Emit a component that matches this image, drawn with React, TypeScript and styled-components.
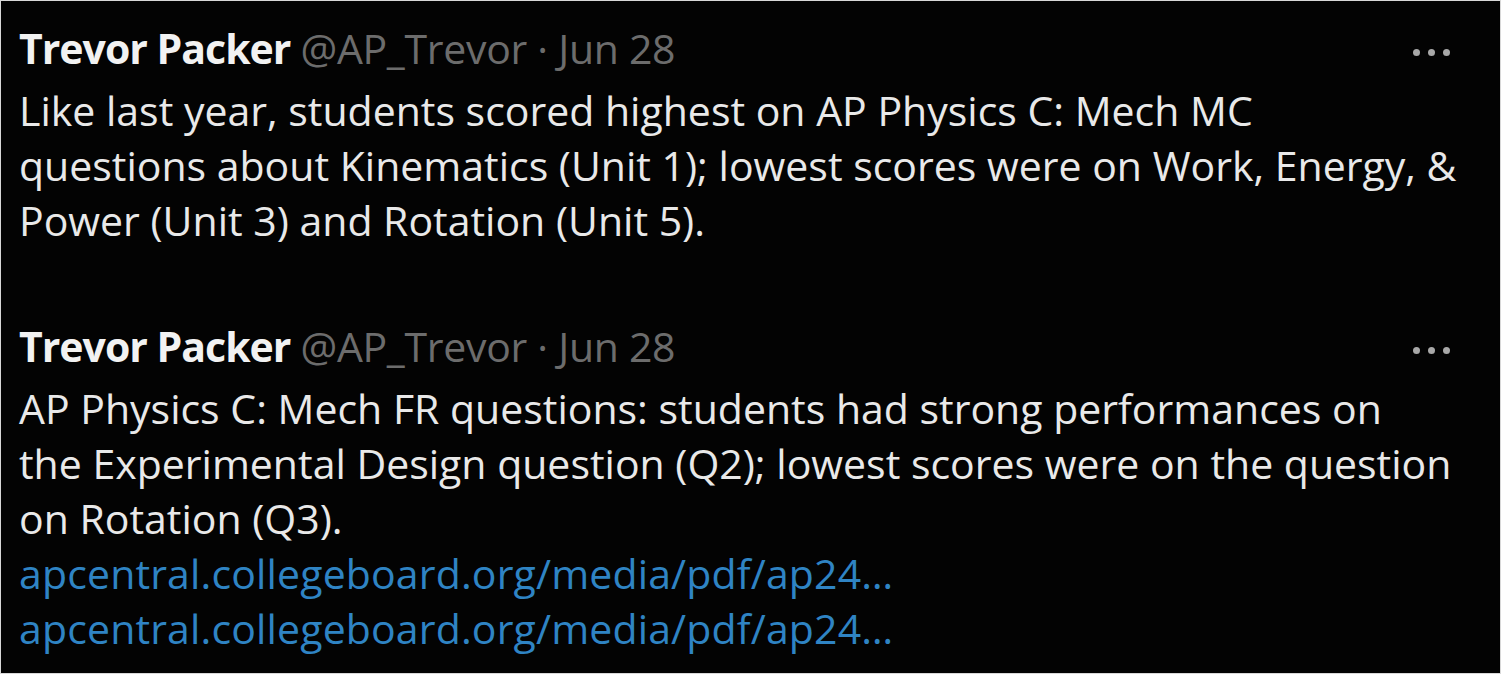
import { ReactElement } from 'react';
import styled, { createGlobalStyle } from 'styled-components';

interface ITweet {
    name: string;
    handle: string;
    date: string;
    lines: string[];
    links: string[];
}

const tweets: ITweet[] = [
    {
        name: 'Trevor Packer',
        handle: '@AP_Trevor',
        date: 'Jun 28',
        lines: [
            'Like last year, students scored highest on AP Physics C: Mech MC',
            'questions about Kinematics (Unit 1); lowest scores were on Work, Energy, &',
            'Power (Unit 3) and Rotation (Unit 5).',
        ],
        links: [],
    },
    {
        name: 'Trevor Packer',
        handle: '@AP_Trevor',
        date: 'Jun 28',
        lines: [
            'AP Physics C: Mech FR questions: students had strong performances on',
            'the Experimental Design question (Q2); lowest scores were on the question',
            'on Rotation (Q3).',
        ],
        links: [
            'apcentral.collegeboard.org/media/pdf/ap24…',
            'apcentral.collegeboard.org/media/pdf/ap24…',
        ],
    },
];

const Tweet = ({ tweet }: { tweet: ITweet }): ReactElement => (
    <TweetBox>
        <Header>
            <Name>{tweet.name}</Name>
            <Meta>{tweet.handle} · {tweet.date}</Meta>
            <MoreButton aria-label="More">
                <Dot />
                <Dot />
                <Dot />
            </MoreButton>
        </Header>
        <Body>
            {tweet.lines.map((line, i) => (
                <Line key={i}>{line}</Line>
            ))}
            {tweet.links.map((link, i) => (
                <Link key={'l' + i}>{link}</Link>
            ))}
        </Body>
    </TweetBox>
);

export default function App(): ReactElement {
    return (
        <>
            <GlobalStyle />
            <Frame>
                {tweets.map((t, i) => (
                    <Tweet key={i} tweet={t} />
                ))}
            </Frame>
        </>
    );
}

const GlobalStyle = createGlobalStyle`
html, body {
    margin: 0;
    padding: 0;
    background: #000;
}
* {
    box-sizing: border-box;
}
`;

const Frame = styled.div`
width: 1501px;
height: 674px;
background: #030303;
border: 1px solid #d8d8d8;
font-family: "Open Sans", "Liberation Sans", sans-serif;
overflow: hidden;
padding: 24px 0 0 18px;
display: flex;
flex-direction: column;
gap: 75px;
`;

const TweetBox = styled.div`
display: flex;
flex-direction: column;
gap: 12px;
`;

const Header = styled.div`
display: flex;
align-items: center;
gap: 10px;
height: 46px;
`;

const Name = styled.span`
color: #f2f2f2;
font-weight: 700;
font-size: 41px;
letter-spacing: -1px;
`;

const Meta = styled.span`
color: #6c6c6c;
font-size: 41px;
letter-spacing: -0.3px;
`;

const MoreButton = styled.div`
margin-left: auto;
margin-right: 50px;
padding-top: 8px;
display: flex;
gap: 8px;
align-items: center;
`;

const Dot = styled.span`
width: 7px;
height: 7px;
border-radius: 50%;
background: #a8a8a8;
`;

const Body = styled.div`
display: flex;
flex-direction: column;
`;

const Line = styled.div`
color: #e9e9e9;
font-size: 41px;
line-height: 55px;
letter-spacing: 0;
white-space: nowrap;
`;

const Link = styled(Line)`
color: #2f84c4;
letter-spacing: 0.15px;
`;
